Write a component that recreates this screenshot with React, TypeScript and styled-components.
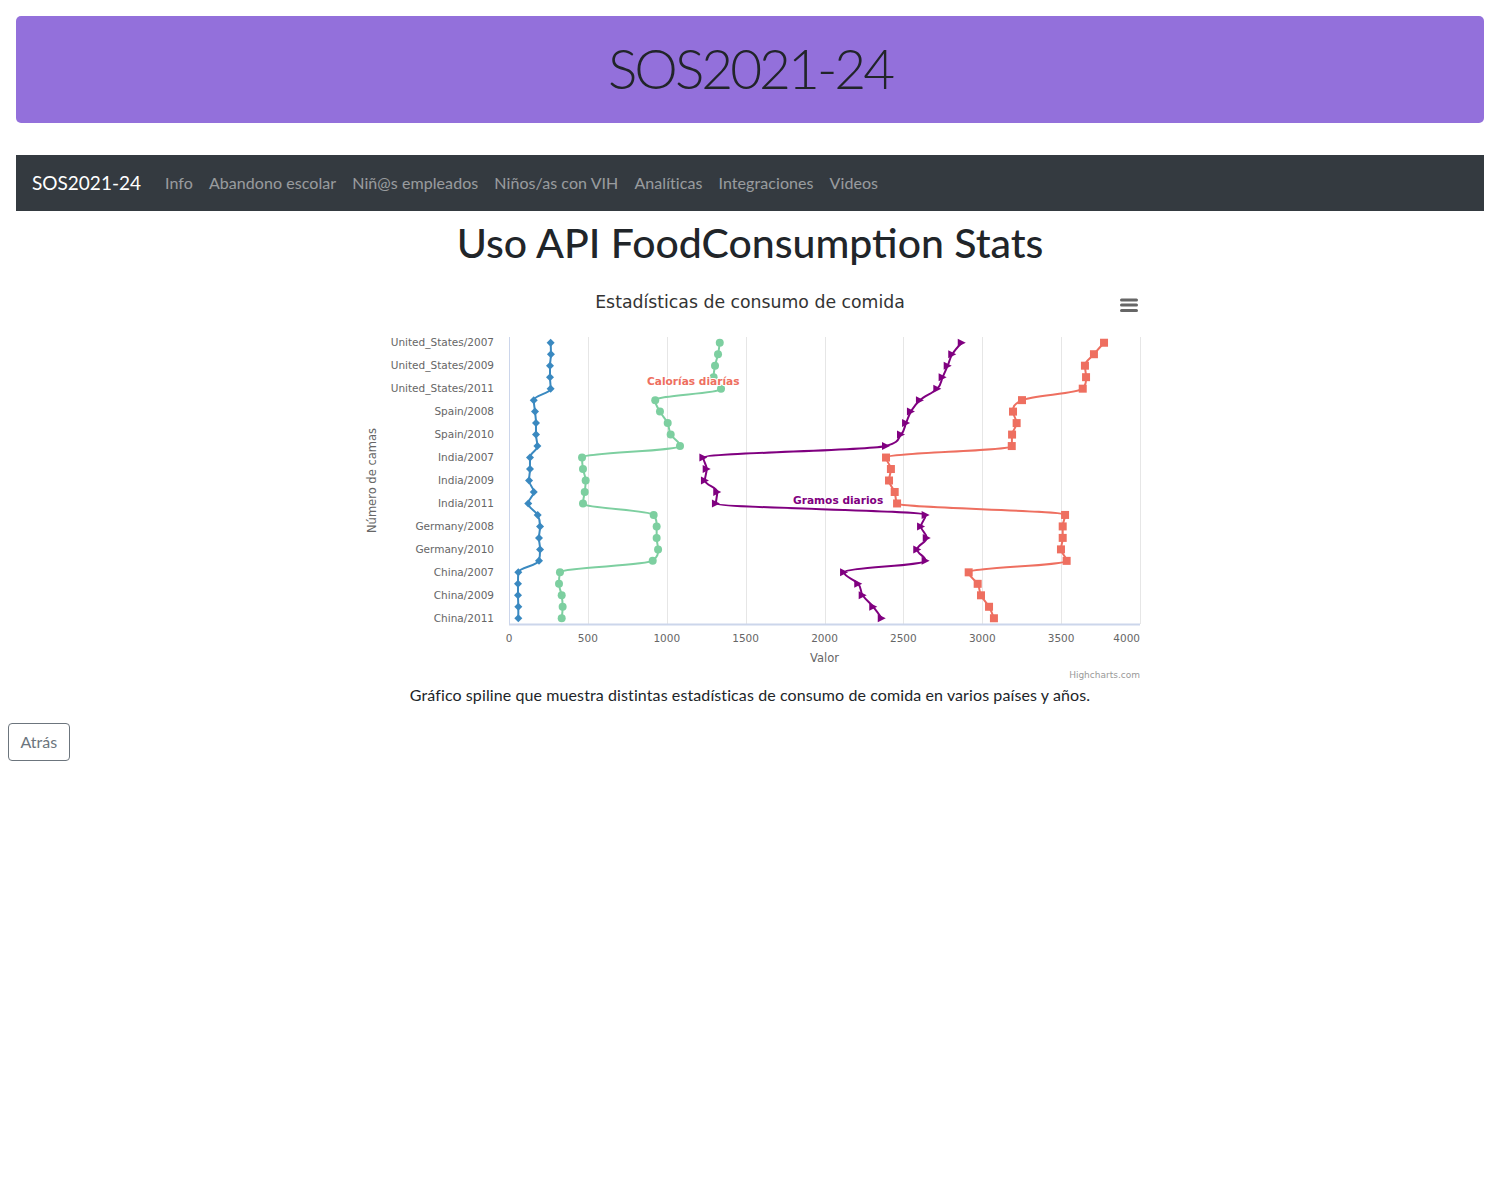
import React from "react";
import styled, { createGlobalStyle } from "styled-components";

const GlobalStyle = createGlobalStyle`
  html, body { background: #fff; }
  body {
    margin: 0;
    padding: 8px;
    font-family: Lato, "Open Sans", sans-serif;
    font-size: 16px;
    line-height: 1.5;
    color: #212529;
  }
`;

const Jumbotron = styled.header`
  margin: 8px 8px 32px;
  height: 107px;
  background: #9370db;
  border-radius: 5px;
  display: flex;
  align-items: center;
  justify-content: center;
`;

const Display = styled.h1`
  margin: 0 0 4px;
  font-family: Lato, sans-serif;
  font-weight: 300;
  font-size: 55px;
  letter-spacing: -3px;
  line-height: 1.2;
  color: #212529;
`;

const NavBar = styled.nav`
  margin: 0 8px;
  height: 56px;
  padding: 0 16px;
  background: #343a40;
  display: flex;
  align-items: center;
`;

const Brand = styled.span`
  font-size: 19px;
  color: #fff;
  margin-right: 16px;
`;

const NavLink = styled.a`
  padding: 8px;
  font-size: 16px;
  letter-spacing: 0.07px;
  color: rgba(255, 255, 255, 0.5);
  text-decoration: none;
`;

const Main = styled.main`
  text-align: center;
`;

const PageTitle = styled.h1`
  margin: 8px 0 16px;
  font-size: 41px;
  font-weight: 500;
  line-height: 48px;
  color: #212529;
`;

const Figure = styled.figure`
  width: 800px;
  margin: 0 auto;
`;

const ChartSvg = styled.svg`
  display: block;
  font-family: "DejaVu Sans", sans-serif;
`;

const ChartTitle = styled.text`
  font-size: 17.3px;
  fill: #333333;
`;

const AxisLabel = styled.text`
  font-size: 10.5px;
  fill: #666666;
`;

const AxisTitle = styled.text`
  font-size: 11.5px;
  fill: #666666;
`;

const Credits = styled.text`
  font-size: 9px;
  fill: #999999;
`;

const SeriesLabel = styled.text<{ $color: string }>`
  font-size: 10.6px;
  font-weight: bold;
  fill: ${(p) => p.$color};
  stroke: #ffffff;
  stroke-width: 2px;
  stroke-linejoin: round;
  paint-order: stroke;
`;

const Description = styled.p`
  margin: 0 10px 16px;
  font-size: 16px;
  letter-spacing: 0.1px;
  color: #212529;
`;

const BackButton = styled.button`
  display: inline-block;
  font-family: Lato, sans-serif;
  font-size: 16px;
  line-height: 24px;
  padding: 6px 11.5px;
  color: #6c757d;
  background: transparent;
  border: 1px solid #6c757d;
  border-radius: 4px;
`;

const countries = ["United_States", "Spain", "India", "Germany", "China"];
const years = [2007, 2008, 2009, 2010, 2011];
const categories = countries.flatMap((c) => years.map((y) => `${c}/${y}`));

const blue = [264, 266, 260, 260, 264, 157, 165, 171, 171, 180, 133, 133, 127, 157, 122, 182, 197, 190, 197, 190, 59, 57, 57, 59, 59];
const green = [1336, 1325, 1306, 1297, 1344, 927, 957, 1006, 1025, 1084, 463, 469, 486, 480, 469, 917, 936, 936, 945, 911, 323, 317, 334, 340, 334];
const purple = [2870, 2810, 2781, 2749, 2715, 2605, 2548, 2517, 2485, 2390, 1232, 1253, 1242, 1320, 1312, 2641, 2612, 2648, 2588, 2641, 2124, 2214, 2242, 2309, 2363];
const red = [3772, 3708, 3651, 3658, 3637, 3252, 3195, 3218, 3189, 3187, 2390, 2421, 2409, 2445, 2460, 3525, 3510, 3510, 3499, 3535, 2914, 2971, 2992, 3043, 3074];

const PLOT_LEFT = 159;
const PLOT_WIDTH = 631;
const PLOT_TOP = 54;
const PLOT_HEIGHT = 287;
const N = 25;

const sx = (v: number) => PLOT_LEFT + (v * PLOT_WIDTH) / 4000;
const sy = (i: number) => PLOT_TOP + ((i + 0.5) * PLOT_HEIGHT) / N;

type Pt = [number, number];

function splinePath(pts: Pt[]): string {
  const sm = 1.5;
  const den = sm + 1;
  const conts = pts.map((p, i) => {
    if (i === 0 || i === pts.length - 1) return null;
    const [py, px] = p;
    const [ly, lx] = pts[i - 1];
    const [ny, nx] = pts[i + 1];
    const lcx = (sm * px + lx) / den;
    let lcy = (sm * py + ly) / den;
    const rcx = (sm * px + nx) / den;
    let rcy = (sm * py + ny) / den;
    let corr = 0;
    if (rcx !== lcx) corr = ((rcy - lcy) * (rcx - px)) / (rcx - lcx) + py - rcy;
    lcy += corr;
    rcy += corr;
    if (lcy > ly && lcy > py) {
      lcy = Math.max(ly, py);
      rcy = 2 * py - lcy;
    } else if (lcy < ly && lcy < py) {
      lcy = Math.min(ly, py);
      rcy = 2 * py - lcy;
    }
    if (rcy > ny && rcy > py) {
      rcy = Math.max(ny, py);
      lcy = 2 * py - rcy;
    } else if (rcy < ny && rcy < py) {
      rcy = Math.min(ny, py);
      lcy = 2 * py - rcy;
    }
    return { lcx, lcy, rcx, rcy };
  });
  let d = `M ${pts[0][0].toFixed(2)} ${pts[0][1].toFixed(2)}`;
  for (let i = 1; i < pts.length; i++) {
    const prev = conts[i - 1];
    const cur = conts[i];
    const [x, y] = pts[i];
    const [px, py] = pts[i - 1];
    const c1 = prev ? [prev.rcy, prev.rcx] : [px, py];
    const c2 = cur ? [cur.lcy, cur.lcx] : [x, y];
    d += ` C ${c1[0].toFixed(2)} ${c1[1].toFixed(2)} ${c2[0].toFixed(2)} ${c2[1].toFixed(2)} ${x.toFixed(2)} ${y.toFixed(2)}`;
  }
  return d;
}

type MarkerKind = "diamond" | "circle" | "triangle" | "square";

const Marker: React.FC<{ kind: MarkerKind; x: number; y: number; color: string }> = ({ kind, x, y, color }) => {
  const r = 4;
  if (kind === "circle") return <circle cx={x} cy={y} r={r} fill={color} />;
  if (kind === "square") return <rect x={x - r} y={y - r} width={2 * r} height={2 * r} fill={color} />;
  if (kind === "diamond")
    return <path d={`M ${x} ${y - r} L ${x + r} ${y} L ${x} ${y + r} L ${x - r} ${y} Z`} fill={color} />;
  return <path d={`M ${x + r} ${y} L ${x - r} ${y - r} L ${x - r} ${y + r} Z`} fill={color} />;
};

const series: { data: number[]; color: string; kind: MarkerKind }[] = [
  { data: blue, color: "#3a89c0", kind: "diamond" },
  { data: green, color: "#7dcfa0", kind: "circle" },
  { data: purple, color: "#800080", kind: "triangle" },
  { data: red, color: "#ee6f60", kind: "square" },
];

const Chart: React.FC = () => {
  const ticks = [0, 500, 1000, 1500, 2000, 2500, 3000, 3500, 4000];
  const plotBottom = PLOT_TOP + PLOT_HEIGHT;
  return (
    <ChartSvg width={800} height={400} viewBox="0 0 800 400">
      <rect x={0} y={0} width={800} height={400} fill="#ffffff" />
      <ChartTitle x={400} y={24.5} textAnchor="middle">
        Estadísticas de consumo de comida
      </ChartTitle>
      <g stroke="#666666" strokeWidth={3} strokeLinecap="round">
        <line x1={771.5} y1={17} x2={786.5} y2={17} />
        <line x1={771.5} y1={22} x2={786.5} y2={22} />
        <line x1={771.5} y1={27.5} x2={786.5} y2={27.5} />
      </g>
      {ticks.slice(1).map((t) => (
        <line key={t} x1={Math.round(sx(t)) + 0.5} y1={PLOT_TOP} x2={Math.round(sx(t)) + 0.5} y2={plotBottom} stroke="#e6e6e6" strokeWidth={1} />
      ))}
      <line x1={PLOT_LEFT + 0.5} y1={PLOT_TOP} x2={PLOT_LEFT + 0.5} y2={plotBottom} stroke="#ccd6eb" strokeWidth={1} />
      <line x1={PLOT_LEFT} y1={plotBottom + 0.5} x2={PLOT_LEFT + PLOT_WIDTH} y2={plotBottom + 0.5} stroke="#ccd6eb" strokeWidth={2} />
      {categories.map((c, i) =>
        i % 2 === 0 ? (
          <AxisLabel key={c} x={144} y={sy(i) + 3.3} textAnchor="end">
            {c}
          </AxisLabel>
        ) : null
      )}
      {ticks.map((t, i) => (
        <AxisLabel
          key={t}
          x={i === ticks.length - 1 ? PLOT_LEFT + PLOT_WIDTH : sx(t)}
          y={359}
          textAnchor={i === ticks.length - 1 ? "end" : "middle"}
        >
          {t}
        </AxisLabel>
      ))}
      <AxisTitle x={PLOT_LEFT + PLOT_WIDTH / 2} y={379} textAnchor="middle">
        Valor
      </AxisTitle>
      <AxisTitle x={26} y={PLOT_TOP + PLOT_HEIGHT / 2} textAnchor="middle" transform={`rotate(-90 26 ${PLOT_TOP + PLOT_HEIGHT / 2})`}>
        Número de camas
      </AxisTitle>
      {series.map((s) => {
        const pts: Pt[] = s.data.map((v, i) => [sx(v), sy(i)]);
        return (
          <g key={s.color}>
            <path d={splinePath(pts)} fill="none" stroke={s.color} strokeWidth={2} strokeLinejoin="round" strokeLinecap="round" />
            {pts.map(([x, y], i) => (
              <Marker key={i} kind={s.kind} x={x} y={y} color={s.color} />
            ))}
          </g>
        );
      })}
      <SeriesLabel $color="#ee6f60" x={297} y={101.5}>
        Calorías diarías
      </SeriesLabel>
      <SeriesLabel $color="#800080" x={443} y={221}>
        Gramos diarios
      </SeriesLabel>
      <Credits x={790} y={395} textAnchor="end">
        Highcharts.com
      </Credits>
    </ChartSvg>
  );
};

const navItems = ["Info", "Abandono escolar", "Niñ@s empleados", "Niños/as con VIH", "Analíticas", "Integraciones", "Videos"];

export default function App() {
  return (
    <>
      <GlobalStyle />
      <Jumbotron>
        <Display>SOS2021-24</Display>
      </Jumbotron>
      <NavBar>
        <Brand>SOS2021-24</Brand>
        {navItems.map((n) => (
          <NavLink key={n} href="#">
            {n}
          </NavLink>
        ))}
      </NavBar>
      <Main>
        <PageTitle>Uso API FoodConsumption Stats</PageTitle>
        <Figure>
          <Chart />
          <Description>
            Gráfico spiline que muestra distintas estadísticas de consumo de comida en varios países y años.
          </Description>
        </Figure>
      </Main>
      <BackButton>Atrás</BackButton>
    </>
  );
}
